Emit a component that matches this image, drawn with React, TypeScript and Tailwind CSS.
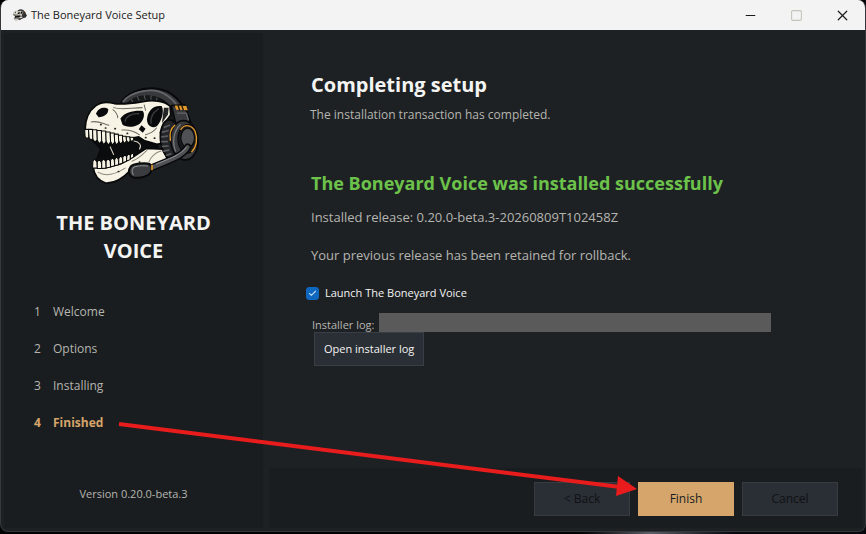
import { useState } from "react";
import { Check, Minus, Square, X } from "lucide-react";

const steps = ["Welcome", "Options", "Installing", "Finished"];
const currentStep = 3;

export default function App() {
  const [launch, setLaunch] = useState(true);

  return (
    <div className="relative flex h-screen flex-col bg-linear-to-r from-black from-65% via-[#5c6068] via-75% to-[#05070c] to-85% pb-[2px] font-['Open_Sans','Noto_Sans',sans-serif]">
      <div className="flex min-h-0 flex-1 flex-col overflow-hidden rounded-lg border border-t-0 border-[#34383b] bg-[#1e2124]">
        <TitleBar />

        <div className="flex min-h-0 flex-1 gap-[6px] p-[3px]">
          {/* ================= SIDEBAR ================= */}
          <aside className="flex w-[259px] shrink-0 flex-col bg-[#1a1d1f] pt-[43px] pb-6">
            <BoneyardLogo className="h-[120px] w-[140px] self-center" />
            <h1 className="mt-[13px] px-10 text-center text-xl leading-7 font-bold text-[#f4f4f2]">
              THE BONEYARD VOICE
            </h1>
            <ol className="mt-[37px] flex flex-col gap-[17px] pl-[30px] text-xs leading-5">
              {steps.map((step, i) => (
                <li
                  key={step}
                  className={
                    i === currentStep
                      ? "flex font-bold text-[#d5a56b]"
                      : "flex text-[#b5b5b0]"
                  }
                >
                  <span className="w-[19px]">{i + 1}</span>
                  {step}
                </li>
              ))}
            </ol>
            <p className="mt-auto text-center text-[11px] leading-5 text-[#b5b5b0]">
              Version 0.20.0-beta.3
            </p>
          </aside>

          {/* ================= CONTENT ================= */}
          <div className="flex min-w-0 flex-1 flex-col">
            <main className="flex-1 pt-[38px] pr-[90px] pl-[42px] text-[13px] leading-5 text-[#b5b5b0]">
              <h2 className="text-xl leading-7 font-bold text-[#f4f4f2]">
                Completing setup
              </h2>
              <p className="mt-[6px] -ml-px text-xs leading-5">
                The installation transaction has completed.
              </p>

              <h3 className="mt-[44px] text-lg leading-7 font-bold text-[#6cc24a]">
                The Boneyard Voice was installed successfully
              </h3>
              <p className="mt-[10px]">
                Installed release: 0.20.0-beta.3-20260809T102458Z
              </p>
              <p className="mt-[18px]">
                Your previous release has been retained for rollback.
              </p>

              <label className="mt-[18px] -ml-[5px] flex items-center gap-[6px] text-[11px] leading-5 text-[#f4f4f2]">
                <span className="relative flex">
                  <input
                    type="checkbox"
                    checked={launch}
                    onChange={(e) => setLaunch(e.target.checked)}
                    className="size-[13px] appearance-none rounded-[3px] border border-[#0f67c0] checked:bg-[#0f67c0]"
                  />
                  {launch && (
                    <Check
                      className="pointer-events-none absolute top-[2px] left-[2px] text-[#b9d8f5]"
                      size={9}
                      strokeWidth={3}
                    />
                  )}
                </span>
                Launch The Boneyard Voice
              </label>

              <div className="mt-[10px] flex items-end gap-[5px] text-[11px] leading-[15px]">
                <span className="shrink-0 pl-px">Installer log:</span>
                <span className="h-[19px] w-[392px] bg-[#5a5a5b]" />
              </div>
              <button className="ml-[3px] h-[34px] border border-[#3a3f47] bg-[#2a2e35] px-[9px] text-[11px] text-[#f4f4f2]">
                Open installer log
              </button>
            </main>

            <footer className="flex h-[60px] items-center justify-end gap-2 bg-[#1a1d1f] pt-[2px] pr-6 text-xs">
              <button
                disabled
                className="h-[34px] w-24 border border-[#373b42] bg-[#2a2e35] text-[#101214]"
              >
                &lt; Back
              </button>
              <button className="h-[34px] w-24 bg-[#d5a56b] text-[#1a1d1f]">
                Finish
              </button>
              <button
                disabled
                className="h-[34px] w-24 border border-[#373b42] bg-[#2a2e35] text-[#101214]"
              >
                Cancel
              </button>
            </footer>
          </div>
        </div>
      </div>

      <PointerArrow />
    </div>
  );
}

/* ================= TITLE BAR ================= */

function TitleBar() {
  return (
    <header className="flex h-[30px] shrink-0 items-center bg-[#f3f3f3] pl-[10px] text-[11px] text-[#1a1a1a]">
      <BoneyardLogo className="h-[14px] w-4" />
      <span className="ml-1">The Boneyard Voice Setup</span>
      <div className="ml-auto flex h-full">
        <button aria-label="Minimize" className="flex w-[46px] items-center justify-center">
          <Minus size={15} strokeWidth={1.6} />
        </button>
        <button
          aria-label="Maximize"
          disabled
          className="flex w-[46px] items-center justify-center text-[#c4c4ba]"
        >
          <Square size={13} strokeWidth={2} />
        </button>
        <button aria-label="Close" className="flex w-[46px] items-center justify-center">
          <X size={17} strokeWidth={1.7} />
        </button>
      </div>
    </header>
  );
}

/* ================= ARROW ================= */

function PointerArrow() {
  return (
    <svg
      className="pointer-events-none absolute inset-0 h-full w-full"
      viewBox="0 0 866 534"
      fill="#e81c1c"
      aria-hidden="true"
    >
      <path d="M119 424 L620 487" stroke="#e81c1c" strokeWidth="4" />
      <path d="M618 476 L637 489 L616 496 Z" />
    </svg>
  );
}

/* ================= LOGO ================= */

function BoneyardLogo({ className }: { className?: string }) {
  return (
    <svg
      className={className}
      viewBox="-16 5 412 353"
      strokeLinecap="round"
      strokeLinejoin="round"
      aria-hidden="true"
    >
      {/* headband */}
      <path d="M150 88 C166 54 212 38 254 42 C306 48 338 86 356 142 L318 142 C304 96 276 68 236 66 C208 66 188 76 176 92 Z" fill="#38393b" stroke="#08090a" strokeWidth="6" />
      <path d="M158 80 C178 54 226 42 262 50 C300 62 324 94 340 134" fill="none" stroke="#66676a" strokeWidth="5" />
      <path d="M174 86 C204 62 246 62 270 82 C290 94 300 112 306 130" fill="none" stroke="#17181a" strokeWidth="12" />
      <path d="M182 74 l6 10 M200 66 l5 10 M220 62 l3 12 M240 63 l0 12 M258 70 l-4 10" stroke="#55565a" strokeWidth="3" />

      {/* mouth cavity */}
      <path d="M50 176 L196 186 L262 212 L186 266 L72 272 L92 220 Z" fill="#0b0c0d" stroke="#08090a" strokeWidth="4" />

      {/* lower jaw */}
      <path d="M70 274 L100 276 L150 264 L186 244 L226 218 L276 220 L288 250 L234 276 L180 282 C160 304 136 322 106 320 C84 312 72 294 70 274 Z" fill="#f8f4e5" stroke="#08090a" strokeWidth="5" />
      <path d="M84 288 C106 302 132 296 164 276 M228 224 C214 238 200 250 184 256 M270 226 C252 230 238 244 234 258" fill="none" stroke="#8d897d" strokeWidth="3" />

      {/* cranium */}
      <path d="M46 164 C46 134 56 108 78 92 C92 82 112 80 132 86 C162 90 194 84 220 80 C244 74 280 78 296 94 L298 120 L286 136 L276 174 L284 200 L258 206 L222 196 L204 184 L174 190 L136 178 L88 168 Z" fill="#f8f4e5" stroke="#08090a" strokeWidth="5" />
      <path d="M78 116 C84 98 104 94 114 102 C116 116 102 126 86 126 Z" fill="#090a0b" />
      <path d="M150 130 C164 110 192 106 216 108 C224 120 216 138 206 146 C188 158 164 156 156 148 Z" fill="#090a0b" />
      <path d="M228 134 C230 108 246 90 272 94 C280 112 270 138 258 152 C244 160 230 154 228 134 Z" fill="#090a0b" />
      <path d="M278 98 L292 98 L290 118 L272 144 Z" fill="#242527" />
      <path d="M212 150 L224 160 L216 172 L204 162 Z" fill="#090a0b" />
      <path d="M204 116 C182 114 166 126 164 138 M262 102 C246 112 238 128 240 144" fill="none" stroke="#3c3d40" strokeWidth="4" />
      <path d="M128 104 C138 112 142 120 142 128 M130 98 C154 106 184 98 214 98 M64 140 C84 136 96 144 116 150 M154 164 C176 162 190 166 206 178 M224 178 C240 174 250 166 256 158 M220 90 L224 106 M266 170 L272 192" fill="none" stroke="#6e6b62" strokeWidth="3" />
      <path d="M92 148 h1 M106 158 h1 M134 160 h1 M170 174 h1 M224 186 h1 M250 188 h1 M210 272 h1 M190 270 h1 M206 258 h1 M144 286 h1" stroke="#25251f" strokeWidth="5" />

      {/* upper teeth */}
      <g fill="#f8f4e5" stroke="#08090a" strokeWidth="3">
        <path d="M45 162 h11 l1 24 l-6 3 l-5 -6 Z" />
        <path d="M56 162 h12 l1 27 l-6 5 l-5 -7 Z" />
        <path d="M68 163 h13 l1 30 l-7 6 l-6 -8 Z" />
        <path d="M81 165 h13 l1 31 l-7 8 l-6 -10 Z" />
        <path d="M94 167 h13 l1 31 l-7 9 l-6 -11 Z" />
        <path d="M107 170 h13 l1 29 l-7 9 l-6 -11 Z" />
        <path d="M120 173 h12 l1 26 l-6 9 l-6 -10 Z" />
        <path d="M132 176 h12 l1 23 l-6 9 l-6 -10 Z" />
        <path d="M144 179 h12 l1 18 l-6 9 l-6 -10 Z" />
        <path d="M156 182 h11 l1 14 l-6 8 l-5 -9 Z" />
        <path d="M167 184 h11 l1 10 l-6 8 l-5 -8 Z" />
        <path d="M178 185 h11 l0 6 l-5 8 l-5 -7 Z" />
      </g>

      {/* lower teeth */}
      <g fill="#f8f4e5" stroke="#08090a" strokeWidth="3">
        <path d="M68 276 l1 -20 l5 -7 l7 9 l1 18 Z" />
        <path d="M82 277 l0 -19 l5 -8 l7 9 l1 18 Z" />
        <path d="M95 277 l0 -21 l6 -8 l6 9 l1 19 Z" />
        <path d="M108 276 l0 -20 l6 -9 l6 9 l1 17 Z" />
        <path d="M121 273 l0 -20 l6 -9 l5 9 l1 16 Z" />
        <path d="M133 269 l0 -18 l6 -9 l5 9 l1 15 Z" />
        <path d="M145 265 l0 -17 l6 -9 l5 8 l1 14 Z" />
        <path d="M157 260 l0 -16 l7 -9 l4 8 l0 13 Z" />
        <path d="M168 255 l1 -15 l7 -8 l3 8 l0 11 Z" />
        <path d="M179 249 l1 -12 l8 -9 l1 15 Z" />
      </g>
      <path d="M120 214 L130 236 M190 196 C206 198 214 210 206 220" fill="none" stroke="#d8d3c4" strokeWidth="3" />

      {/* yoke and ear cup */}
      <path d="M300 92 L338 90 L356 140 L314 150 Z" fill="#3a3b3e" stroke="#08090a" strokeWidth="5" />
      <path d="M310 92 L344 93 L348 106 L314 104 Z" fill="#e39a2d" />
      <path d="M320 92 l4 13 M331 93 l4 12" stroke="#241a0c" strokeWidth="4" />
      <path d="M318 114 L344 114 L350 134" fill="none" stroke="#66676a" strokeWidth="4" />
      <ellipse cx="298" cy="192" rx="30" ry="58" transform="rotate(-6 298 192)" fill="#242527" stroke="#08090a" strokeWidth="5" />
      <path d="M280 156 l14 -6 M274 170 l16 -4 M272 184 l16 -2 M272 198 h16 M274 212 l16 -1 M278 226 l14 -3 M286 238 l12 -4" stroke="#5c5d61" strokeWidth="5" />
      <ellipse cx="338" cy="194" rx="40" ry="58" transform="rotate(-5 338 194)" fill="#3a3b3e" stroke="#08090a" strokeWidth="5" />
      <path d="M312 226 C302 200 306 168 326 148" fill="none" stroke="#77787b" strokeWidth="4" />
      <ellipse cx="348" cy="190" rx="29" ry="42" fill="#191a1b" stroke="#08090a" strokeWidth="3" />
      <path d="M297 194 C294 174 300 158 310 150 M328 162 C340 144 362 150 370 168 C378 190 374 214 360 228" fill="none" stroke="#e39a2d" strokeWidth="4" />
      <ellipse cx="348" cy="187" rx="20" ry="28" fill="#505155" stroke="#08090a" strokeWidth="3" />

      {/* microphone boom */}
      <path d="M348 214 C336 238 300 252 244 274" fill="none" stroke="#08090a" strokeWidth="21" />
      <path d="M348 214 C336 238 300 252 244 274" fill="none" stroke="#505154" strokeWidth="12" />
      <path d="M344 214 C328 236 298 248 256 264" fill="none" stroke="#8a8b8e" strokeWidth="3" />
      <path d="M180 272 C188 262 224 260 236 264 C246 272 244 288 232 296 C216 306 188 308 180 298 C174 290 174 280 180 272 Z" fill="#3b3c3f" stroke="#08090a" strokeWidth="6" />
      <path d="M188 296 C182 286 184 276 192 272 C206 268 218 268 230 270" fill="none" stroke="#85868a" strokeWidth="3" />
      <path d="M243 268 v12" stroke="#e39a2d" strokeWidth="5" />
    </svg>
  );
}
